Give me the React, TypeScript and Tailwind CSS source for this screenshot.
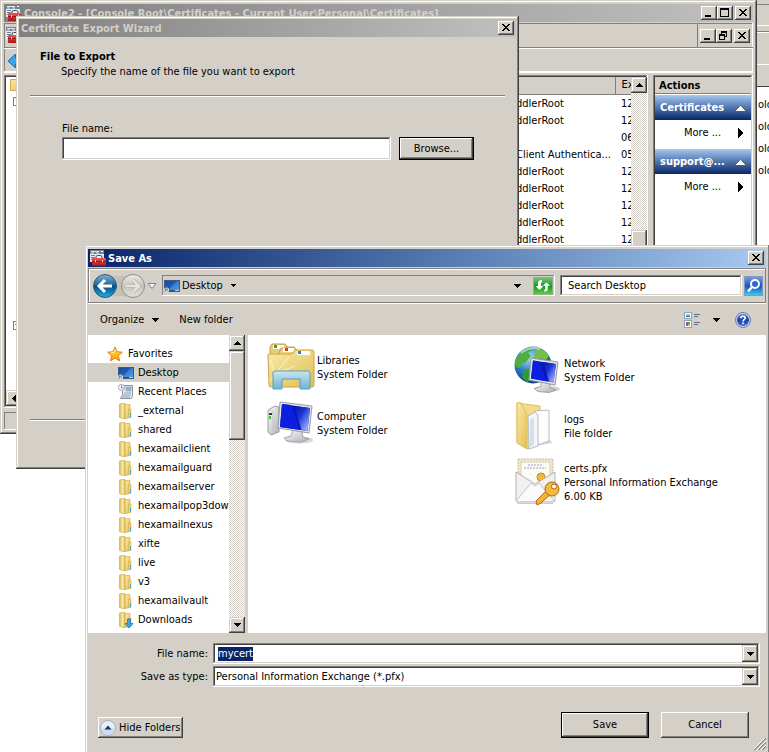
import { useEffect, useRef } from "react";
import type { ReactNode } from "react";

const WINDOW =
  "bg-[#d4d0c8] shadow-[inset_-1px_-1px_#404040,inset_1px_1px_#d4d0c8,inset_-2px_-2px_#808080,inset_2px_2px_#fff]";
const RAISED =
  "bg-[#d4d0c8] shadow-[inset_-1px_-1px_#404040,inset_1px_1px_#fff,inset_-2px_-2px_#808080]";
const SCROLL_PART =
  "bg-[#d4d0c8] shadow-[inset_-1px_-1px_#404040,inset_1px_1px_#d4d0c8,inset_-2px_-2px_#808080,inset_2px_2px_#fff]";
const DEFAULT_BUTTON =
  "bg-[#d4d0c8] border border-black shadow-[inset_-1px_-1px_#404040,inset_1px_1px_#fff,inset_-2px_-2px_#808080]";
const SUNKEN =
  "shadow-[inset_-1px_-1px_#fff,inset_1px_1px_#808080,inset_-2px_-2px_#d4d0c8,inset_2px_2px_#404040]";
const THIN_SUNKEN = "shadow-[inset_-1px_-1px_#fff,inset_1px_1px_#808080]";
const TRACK =
  "bg-[conic-gradient(#fff_25%,#d4d0c8_0_50%,#fff_0_75%,#d4d0c8_0)] bg-[length:2px_2px]";

function Gradients() {
  return (
    <svg width="0" height="0" className="absolute" aria-hidden="true">
      <defs>
        <linearGradient id="gold" x1="0" y1="0" x2="1" y2="1">
          <stop offset="0" stopColor="#f9eaa4" />
          <stop offset="1" stopColor="#e2be58" />
        </linearGradient>
        <linearGradient id="goldSide" x1="0" y1="0" x2="1" y2="0">
          <stop offset="0" stopColor="#d9b64e" />
          <stop offset="0.6" stopColor="#fbeeb0" />
          <stop offset="1" stopColor="#dcb850" />
        </linearGradient>
        <linearGradient id="screen" x1="0" y1="0" x2="1" y2="1">
          <stop offset="0" stopColor="#0414a8" />
          <stop offset="0.4" stopColor="#1a34d8" />
          <stop offset="1" stopColor="#c3d2ff" />
        </linearGradient>
        <linearGradient id="desk" x1="0" y1="0" x2="1" y2="1">
          <stop offset="0" stopColor="#1c4fa8" />
          <stop offset="1" stopColor="#58a8ee" />
        </linearGradient>
        <linearGradient id="metal" x1="0" y1="0" x2="1" y2="1">
          <stop offset="0" stopColor="#ffffff" />
          <stop offset="1" stopColor="#a9adb3" />
        </linearGradient>
        <linearGradient id="glass" x1="0" y1="0" x2="0" y2="1">
          <stop offset="0" stopColor="#c5e8f8" />
          <stop offset="1" stopColor="#62b4dd" />
        </linearGradient>
        <linearGradient id="back" x1="0" y1="0" x2="0" y2="1">
          <stop offset="0" stopColor="#7fb3d3" />
          <stop offset="0.45" stopColor="#1e6a9e" />
          <stop offset="0.5" stopColor="#074a80" />
          <stop offset="1" stopColor="#1fb0e6" />
        </linearGradient>
        <linearGradient id="forward" x1="0" y1="0" x2="0" y2="1">
          <stop offset="0" stopColor="#ececea" />
          <stop offset="0.5" stopColor="#c6c4be" />
          <stop offset="1" stopColor="#e4e2dc" />
        </linearGradient>
        <radialGradient id="globe" cx="0.4" cy="0.3" r="0.75">
          <stop offset="0" stopColor="#a5def5" />
          <stop offset="0.5" stopColor="#2c80c8" />
          <stop offset="1" stopColor="#0b3a86" />
        </radialGradient>
        <linearGradient id="refresh" x1="0" y1="0" x2="0" y2="1">
          <stop offset="0" stopColor="#7cc77c" />
          <stop offset="0.5" stopColor="#109a1c" />
          <stop offset="1" stopColor="#5fd23f" />
        </linearGradient>
        <linearGradient id="find" x1="0" y1="0" x2="0" y2="1">
          <stop offset="0" stopColor="#7d9fe6" />
          <stop offset="0.5" stopColor="#1b4fc4" />
          <stop offset="1" stopColor="#3fd0f0" />
        </linearGradient>
        <linearGradient id="help" x1="0" y1="0" x2="0" y2="1">
          <stop offset="0" stopColor="#5a86dc" />
          <stop offset="0.5" stopColor="#1a3ea6" />
          <stop offset="1" stopColor="#3f74dc" />
        </linearGradient>
        <linearGradient id="red" x1="0" y1="0" x2="0" y2="1">
          <stop offset="0" stopColor="#e85a55" />
          <stop offset="1" stopColor="#b01010" />
        </linearGradient>
        <linearGradient id="star" x1="0" y1="0" x2="0" y2="1">
          <stop offset="0" stopColor="#ffe04a" />
          <stop offset="1" stopColor="#ff9a10" />
        </linearGradient>
      </defs>
    </svg>
  );
}

function ToolboxIcon() {
  return (
    <svg width="16" height="16" viewBox="0 0 16 16" className="shrink-0" aria-hidden="true">
      <rect x="0" y="0" width="14" height="12" fill="#e8ebf0" />
      <rect x="0" y="0" width="14" height="4" fill="#75808f" />
      <path d="M1 1.500h8M1 3h3M6 3h3" stroke="#dfe6f2" />
      <path d="M11 1.500h2" stroke="#fff" />
      <path d="M1 5.500h4M1 7.500h4M1 9.500h1" stroke="#6b7f9e" />
      <path d="M6 8.500V7q0-1.500 1.500-1.500h3Q12 5.500 12 7v1.500" fill="none" stroke="#4a4a4a" />
      <rect x="2" y="8" width="14" height="8" rx="1" fill="url(#red)" />
      <path d="M2 11.500h14" stroke="#a01010" />
      <path d="M5.500 10v2M12.500 10v2" stroke="#f0dcdc" />
    </svg>
  );
}

function DesktopIcon() {
  return (
    <svg width="16" height="16" viewBox="0 0 16 16" className="shrink-0" aria-hidden="true">
      <rect x="0.5" y="2.500" width="15" height="11" fill="url(#desk)" stroke="#40598c" />
      <path d="M1 3h12L5 11H1z" fill="#1746a0" opacity="0.6" />
      <path d="M5 12.500h10" stroke="#2c4d86" />
      <path d="M11 12.500h4" stroke="#b9cde8" />
      <circle cx="2.500" cy="12" r="2.500" fill="#dcebf6" />
      <rect x="1" y="10.500" width="1.500" height="1.500" fill="#e0482a" />
      <rect x="2.500" y="10.500" width="1.500" height="1.500" fill="#58b030" />
      <rect x="1" y="12" width="1.500" height="1.500" fill="#2f8fe0" />
      <rect x="2.500" y="12" width="1.500" height="1.500" fill="#f0c020" />
    </svg>
  );
}

function StarIcon() {
  return (
    <svg width="16" height="16" viewBox="0 0 16 16" className="shrink-0" aria-hidden="true">
      <path
        d="M8 .8l2.100 4.900 5.300.5-4 3.500 1.300 5.300L8 12.200 3.300 15l1.300-5.300-4-3.500 5.300-.5z"
        fill="url(#star)"
        stroke="#e07a10"
        strokeWidth="0.9"
      />
      <path d="M8 3.500l-1 3-3 .6" fill="none" stroke="#fff6a8" />
    </svg>
  );
}

function RecentIcon() {
  return (
    <svg width="16" height="16" viewBox="0 0 16 16" className="shrink-0" aria-hidden="true">
      <path d="M4.500 1.500h10v10l-1 3h-11l2-4z" fill="#e8edf1" stroke="#8b949e" />
      <rect x="8" y="3" width="5" height="4" fill="#8cbce0" stroke="#6d8ba4" strokeWidth="0.5" />
      <path d="M6 9h7M5 11h8M4 13h8" stroke="#8ba0b2" />
      <circle cx="3.500" cy="3.500" r="3" fill="#fff" stroke="#9aa2a9" />
      <path d="M3.500 1.500v2.500h2" fill="none" stroke="#567" strokeWidth="0.8" />
    </svg>
  );
}

function FolderIcon({ download = false }: { download?: boolean }) {
  return (
    <svg width="16" height="16" viewBox="0 0 16 16" className="shrink-0" aria-hidden="true">
      <path d="M1.500 1L4 .5h3v15H5l-3.500-1z" fill="url(#goldSide)" stroke="#d3b04a" strokeWidth="0.7" />
      <path d="M7 1.500h5v13l-5 1z" fill="url(#gold)" stroke="#d3b04a" strokeWidth="0.7" />
      <path d="M10.500 6H13v8.500h-2.500z" fill="#ecd27a" stroke="#c9a53e" strokeWidth="0.5" />
      {download ? (
        <path d="M9.500 7h3v4.500H15L11 16l-4-4.500h2.500z" fill="#3aa5ee" stroke="#1272ba" strokeWidth="0.8" />
      ) : (
        <rect x="12" y="10" width="1" height="4" fill="#4aa8e0" />
      )}
    </svg>
  );
}

function LibrariesIcon() {
  return (
    <svg width="48" height="48" viewBox="0 0 48 48" className="shrink-0" aria-hidden="true">
      <path d="M3 12V4l2-3h13l3 3h6v36H3z" fill="#e9cd72" stroke="#c4a044" />
      <rect x="6" y="2" width="11" height="4" fill="#fff" />
      <rect x="7" y="2" width="3" height="3" fill="#2fa04c" />
      <path d="M12 10l2-5h14l3 3h14v30H12z" fill="#eed47c" stroke="#c4a044" />
      <rect x="16" y="5" width="11" height="4" fill="#fff" />
      <rect x="18" y="5" width="3" height="3" fill="#d8401c" />
      <path d="M1 12q0-1 1-1h23l3-4h17q2 0 2 2v33q0 2-2 2H4q-2 0-2-2z" fill="url(#gold)" stroke="#c9a548" />
      <rect x="30" y="8" width="13" height="4" fill="#fff" />
      <rect x="31" y="8" width="3" height="3" fill="#2c7fd0" />
      <path d="M8 31l14-17M8 31L3 16M8 31l20-8M8 31L2 38" stroke="#fffbe0" opacity="0.75" />
      <path
        d="M6 30q0-2 2-2h33q2 0 2 2v16H33V36H15v10H6z"
        fill="url(#glass)"
        stroke="#4a9cc8"
        opacity="0.92"
      />
    </svg>
  );
}

function ComputerIcon() {
  return (
    <svg width="48" height="48" viewBox="0 0 48 48" className="shrink-0" aria-hidden="true">
      <ellipse cx="32" cy="41" rx="14" ry="3.500" fill="#888" opacity="0.35" />
      <path d="M1 11l7-4 4 1v25l-8 3-3-3z" fill="url(#metal)" stroke="#9a9da2" />
      <path d="M1 11l5 1v23" fill="none" stroke="#c4c6ca" />
      <rect x="2" y="14" width="3" height="2" fill="#333" />
      <rect x="2" y="17" width="2" height="3" fill="#33d02c" />
      <path d="M26 31l9 2 1 5 6 2-8 3-14-1-3-3 7-2z" fill="url(#metal)" stroke="#a6a8ac" />
      <path d="M13 3l32 4-3 27-31-5z" fill="#e3e5e8" stroke="#9a9da2" />
      <path d="M15 5l28 4-2.500 23L13 28z" fill="#0818b8" />
      <path d="M15 5l9 1 9 25-20-3z" fill="#0a1fe0" />
      <path d="M27 7l16 2-2.500 23-6-1z" fill="url(#screen)" />
    </svg>
  );
}

function NetworkIcon() {
  return (
    <svg width="48" height="48" viewBox="0 0 48 48" className="shrink-0" aria-hidden="true">
      <circle cx="19" cy="19" r="18.500" fill="url(#globe)" />
      <path d="M3 11q5-8 13-10l2 3-4 3 3 3-5 6-4 1-2 5-4-1-1-4z" fill="#4fae3c" />
      <path d="M22 2q9 1 13 8l-3 4-6-2-2 3-5-2 2-5z" fill="#72c144" />
      <path d="M9 24l6-1 4 5-2 6-4 2-5-5z" fill="#2d9a34" />
      <path d="M7 7q9-7 19-4" fill="none" stroke="#d8f2fa" strokeWidth="2" opacity="0.6" />
      <ellipse cx="34" cy="43" rx="12" ry="3" fill="#777" opacity="0.35" />
      <path d="M27 36l9 2v4l6 2-7 2.500-11-1-4-3 7-2z" fill="url(#metal)" stroke="#a2a4a8" />
      <path d="M17 12l27 4-3 23-26-5z" fill="#e3e5e8" stroke="#94979c" />
      <path d="M19 14.500l23 3.500-2.500 18.500-22.500-4z" fill="#0818b8" />
      <path d="M19 14.500l6 1 8 20-16-3z" fill="#0a1fe0" />
      <path d="M29 16l13 2-2.500 18.500-4.500-1z" fill="url(#screen)" />
    </svg>
  );
}

function OpenFolderIcon() {
  return (
    <svg width="48" height="48" viewBox="0 0 48 48" className="shrink-0" aria-hidden="true">
      <path d="M16 45l22-4-3-5z" fill="#777" opacity="0.3" />
      <path d="M3 1l23 3v37l-12 6L3 40z" fill="#f2dc8c" stroke="#dcc060" />
      <path d="M21 9l14-1v31l-11 4z" fill="#fdfdfd" stroke="#b9bcc0" />
      <path d="M14 14l7-4 3 3v31l-9 3z" fill="#f4f6f9" stroke="#b9bcc0" />
      <path d="M16 18l4-2v27l-4 2z" fill="#d5e0ee" />
      <path d="M3 1l3-1 7 12v35L3 41z" fill="url(#gold)" stroke="#dcc060" />
    </svg>
  );
}

function CertificateIcon() {
  return (
    <svg width="48" height="48" viewBox="0 0 48 48" className="shrink-0" aria-hidden="true">
      <rect x="4" y="1" width="35" height="26" fill="#eee6d2" stroke="#c9bb97" strokeDasharray="2 1" />
      <rect x="7" y="4" width="29" height="22" fill="#fcfaf4" stroke="#dccfae" />
      <path d="M14 7h15M10 10h22" stroke="#9aa2cc" strokeDasharray="2 1" />
      <circle cx="27" cy="19" r="4" fill="#f0b93c" stroke="#c08a20" />
      <path d="M2 14l19 12 20-12v28q0 2-2 2H4q-2 0-2-2z" fill="#f0f0f0" stroke="#b4b4b4" />
      <path d="M2 43l15-18 4 3 4-3 15 18" fill="#fafafa" stroke="#c4c4c4" />
      <path d="M3 45.500h36" stroke="#999" opacity="0.5" />
      <path d="M34 31l4 4-11 10-4 2-1-4z" fill="#f2b338" stroke="#a86c10" />
      <circle cx="38" cy="31" r="7" fill="#f5b840" stroke="#a86c10" />
      <circle cx="40" cy="28.500" r="2.500" fill="#fff" stroke="#a86c10" />
    </svg>
  );
}

function Triangle({ dir, size = 7, color = "#000" }: { dir: "up" | "down" | "left" | "right"; size?: number; color?: string }) {
  const half = Math.floor((size + 1) / 2);
  const flat = dir === "up" || dir === "down";
  const rows = Array.from({ length: half }, (_, i) => i);
  return (
    <svg
      width={flat ? size : half}
      height={flat ? half : size}
      shapeRendering="crispEdges"
      className="shrink-0"
      aria-hidden="true"
    >
      {rows.map((i) => {
        const span = size - 2 * i;
        const line = dir === "down" || dir === "right" ? i : half - 1 - i;
        return flat ? (
          <rect key={i} x={i} y={line} width={span} height="1" fill={color} />
        ) : (
          <rect key={i} x={line} y={i} width="1" height={span} fill={color} />
        );
      })}
    </svg>
  );
}

type Glyph = "min" | "max" | "restore" | "close";

function CaptionButton({ glyph, label }: { glyph: Glyph; label: string }) {
  return (
    <button type="button" aria-label={label} className={`h-[14px] w-4 shrink-0 ${RAISED}`}>
      <svg width="16" height="14" viewBox="0 0 16 14" shapeRendering="crispEdges" aria-hidden="true">
        {glyph === "min" && <path d="M4 9h6v2H4z" />}
        {glyph === "max" && <path fillRule="evenodd" d="M3 2h9v9H3zM4 4v6h7V4z" />}
        {glyph === "restore" && (
          <path fillRule="evenodd" d="M5 2h6v6H9V7h1V4H6v1H5zM3 5h6v6H3zM4 7v3h4V7z" />
        )}
        {glyph === "close" && (
          <path d="M4 3h2v1h1v1h2V4h1V3h2v1h-1v1h-1v1H9v1h1v1h1v1h1v1h-2V9H9V8H7v1H6v1H4V9h1V8h1V7h1V6H6V5H5V4H4z" />
        )}
      </svg>
    </button>
  );
}

function ScrollButton({ dir, label }: { dir: "up" | "down" | "left"; label: string }) {
  return (
    <button type="button" aria-label={label} className={`flex h-4 w-4 shrink-0 items-center justify-center ${SCROLL_PART}`}>
      <Triangle dir={dir} />
    </button>
  );
}

const CERT_ROWS: [string, string][] = [
  ["ddlerRoot", "12"],
  ["ddlerRoot", "12"],
  ["", "06"],
  ["Client Authentica...", "05"],
  ["ddlerRoot", "12"],
  ["ddlerRoot", "12"],
  ["ddlerRoot", "12"],
  ["ddlerRoot", "12"],
  ["ddlerRoot", "12"],
];

function ActionGroup({ title }: { title: string }) {
  return (
    <section className="mb-[5px]">
      <h3 className="flex h-[25px] items-center justify-between bg-linear-to-b from-[#a6caf0] to-[#0a246a] pt-px pr-[6px] pl-[5px] font-bold text-white">
        {title}
        <Triangle dir="up" size={9} color="#fff" />
      </h3>
      <button type="button" className="flex h-6 w-full items-center justify-between pt-px pr-2 pl-[29px]">
        More ...
        <Triangle dir="right" size={10} />
      </button>
    </section>
  );
}

function ConsoleWindow() {
  return (
    <section className={`absolute top-0 right-3 left-0 flex h-[434px] flex-col p-1 ${WINDOW}`}>
      <header className="flex h-[18px] shrink-0 items-center gap-[2px] bg-linear-to-r from-[#808080] to-[#c0c0c0] px-[2px] font-bold text-[#d4d0c8]">
        <ToolboxIcon />
        <h1 className="min-w-0 flex-1 truncate pt-px">Console2 - [Console Root\Certificates - Current User\Personal\Certificates]</h1>
        <div className="flex">
          <CaptionButton glyph="min" label="Minimize" />
          <CaptionButton glyph="max" label="Maximize" />
        </div>
        <CaptionButton glyph="close" label="Close" />
      </header>
      <div className={`mt-px flex h-[50px] shrink-0 flex-col ${THIN_SUNKEN} border-b border-white`}>
        <div className="flex h-[25px] items-stretch border-b border-[#808080] px-[2px]">
          <div className="flex flex-1 items-center">
            <ToolboxIcon />
          </div>
          <div className="flex items-center gap-[2px] border-l border-[#808080] pt-px pr-px pl-[2px]">
            <div className="flex">
              <CaptionButton glyph="min" label="Minimize view" />
              <CaptionButton glyph="restore" label="Restore view" />
            </div>
            <CaptionButton glyph="close" label="Close view" />
          </div>
        </div>
        <div className="flex flex-1 items-center border-t border-white px-1">
          <button type="button" aria-label="Back">
            <svg width="16" height="14" viewBox="0 0 16 14" aria-hidden="true">
              <path d="M7.500 0v4H16v6H7.500v4L0 7z" fill="#37a5e8" stroke="#1b6fb4" />
            </svg>
          </button>
        </div>
      </div>
      <div className="mt-[2px] flex min-h-0 flex-1 gap-[5px]">
        <div className={`flex w-[180px] flex-col bg-white p-[2px] ${SUNKEN}`}>
          <div className="flex flex-1 flex-col items-start pt-[2px] pl-1">
            <svg width="16" height="12" viewBox="0 0 16 12" aria-hidden="true">
              <path d="M.5 .5h15v11H.5z" fill="url(#gold)" stroke="#d0a850" />
            </svg>
            <span className="mt-[6px] ml-[3px] h-[9px] w-[9px] border border-[#808080] text-center text-[8px] leading-[6px]">-</span>
            <span className="mt-[215px] ml-[3px] h-[9px] w-[9px] border border-[#808080] text-center text-[8px] leading-[6px]">+</span>
          </div>
          <div className={`flex h-4 ${TRACK}`}>
            <ScrollButton dir="left" label="Scroll left" />
          </div>
        </div>
        <div className={`flex min-w-0 flex-1 bg-white p-[2px] pr-px ${SUNKEN}`}>
          <div className="min-w-0 flex-1 overflow-hidden">
            <table className="w-full table-fixed border-collapse text-left">
              <thead>
                <tr className="h-[17px] bg-[#d4d0c8]">
                  <th className="p-0" aria-label="Issued to" />
                  <th className="w-[99px] border-r border-b border-[#808080] p-0" aria-label="Issued by" />
                  <th className="w-4 overflow-hidden border-b border-l border-b-[#808080] border-l-white p-0 pl-[6px] font-normal whitespace-nowrap">Ex</th>
                </tr>
              </thead>
              <tbody>
                {CERT_ROWS.map(([name, date], i) => (
                  <tr key={i} className="h-[17px]">
                    <td className="p-0" />
                    <td className="p-0 pt-[2px] whitespace-nowrap">{name}</td>
                    <td className="overflow-hidden p-0 pt-[2px] pl-[6px]">{date}</td>
                  </tr>
                ))}
              </tbody>
            </table>
          </div>
          <div className={`flex w-4 flex-col ${TRACK}`}>
            <ScrollButton dir="up" label="Scroll list up" />
            <div className={`mt-[137px] flex-1 ${SCROLL_PART}`} />
            <ScrollButton dir="down" label="Scroll list down" />
          </div>
        </div>
        <aside className={`w-[100px] bg-white p-[2px] ${SUNKEN}`}>
          <h2 className="mb-px h-[17px] border-b border-[#808080] bg-[#d4d0c8] pt-px pl-1 leading-4 font-bold">Actions</h2>
          <ActionGroup title="Certificates" />
          <ActionGroup title="support@..." />
        </aside>
      </div>
      <div className={`mt-1 h-[18px] w-full shrink-0 ${THIN_SUNKEN}`} />
    </section>
  );
}

function BackgroundWindow() {
  return (
    <section className="absolute top-0 right-0 w-16 bg-white text-right">
      <div className="h-[5px] border-b border-[#808080] bg-[#d4d0c8]" />
      <div className="h-[21px] border-b border-white bg-[#d4d0c8]" />
      <div className="h-[6px] border-b border-[#808080] bg-[#d4d0c8]" />
      <div className="h-[33px] border-t border-b border-white bg-[#d4d0c8]" />
      <div className="h-[22px] border-b border-[#404040] bg-[#d4d0c8]" />
      <div className="flex flex-col pt-[7px] pl-[53px] text-left leading-[22px]">
        {[0, 1, 2, 3].map((i) => (
          <span key={i} className="overflow-hidden">old</span>
        ))}
      </div>
    </section>
  );
}

function WizardWindow() {
  return (
    <section className={`absolute top-4 left-4 h-[453px] w-[503px] p-[3px] ${WINDOW}`}>
      <header className="flex h-[18px] items-center justify-between bg-linear-to-r from-[#808080] to-[#c0c0c0] px-[2px] font-bold text-[#d4d0c8]">
        <h2 className="pt-px">Certificate Export Wizard</h2>
        <CaptionButton glyph="close" label="Close wizard" />
      </header>
      <div className="px-[11px] pt-3">
        <div className="h-[47px] border-b border-[#808080] pl-[10px] leading-[15px] shadow-[0_1px_#fff]">
          <h3 className="font-bold">File to Export</h3>
          <p className="pl-[21px]">Specify the name of the file you want to export</p>
        </div>
        <div className="pt-[25px] pl-8">
          <label htmlFor="export-name" className="block leading-4">File name:</label>
          <div className="flex gap-2">
            <input id="export-name" className={`h-[23px] w-[329px] bg-white px-1 outline-none ${SUNKEN}`} />
            <button type="button" className={`h-[23px] w-[75px] ${DEFAULT_BUTTON}`}>Browse...</button>
          </div>
        </div>
        <hr className="mt-[259px] border-t border-[#808080] shadow-[0_1px_#fff]" />
      </div>
    </section>
  );
}

const PLACES = [
  "_external", "shared", "hexamailclient", "hexamailguard", "hexamailserver", "hexamailpop3downloader",
  "hexamailnexus", "xifte", "live", "v3", "hexamailvault",
];

function Place({ icon, name, selected = false }: { icon: ReactNode; name: string; selected?: boolean }) {
  return (
    <li className={`flex h-[19px] items-center gap-1 pl-[30px] whitespace-nowrap ${selected ? "bg-[#d4d0c8]" : ""}`}>
      {icon}
      <span className="pt-px">{name}</span>
    </li>
  );
}

function FileItem({ icon, lines }: { icon: ReactNode; lines: string[] }) {
  return (
    <li className="flex h-14 items-center gap-[2px] leading-[14px] whitespace-nowrap">
      {icon}
      <div className="pt-px">
        {lines.map((line) => (
          <div key={line}>{line}</div>
        ))}
      </div>
    </li>
  );
}

function NavigationBar() {
  return (
    <nav className="mt-px flex h-[35px] shrink-0 items-center border border-[#808080] pr-[2px] pl-1 shadow-[inset_1px_1px_#fff,0_1px_#fff]">
      <svg width="69" height="28" viewBox="0 0 69 28" className="shrink-0" aria-hidden="true">
        <path d="M12 2q14 4 28 0v24q-14-4-28 0z" fill="#c3c0b8" />
        <circle cx="12" cy="14" r="12" fill="#e9eef2" />
        <circle cx="12" cy="14" r="11.500" fill="url(#back)" stroke="#33566e" />
        <path d="M12 8l-6 6 6 6M6.500 14H19" fill="none" stroke="#fff" strokeWidth="3" />
        <circle cx="40" cy="14" r="11.500" fill="url(#forward)" stroke="#8e8e8c" />
        <path d="M40 8l6 6-6 6M45.500 14H33" fill="none" stroke="#b4b2ac" strokeWidth="4" />
        <path d="M40 8l6 6-6 6M45.500 14H33" fill="none" stroke="#e6e4de" strokeWidth="2.500" />
        <path d="M55 11.500h8l-4 5z" fill="#f0f4fa" stroke="#7c8596" />
      </svg>
      <div className={`flex h-[21px] min-w-0 flex-1 items-center px-[2px] ${THIN_SUNKEN}`}>
        <DesktopIcon />
        <span className="mr-2 ml-[2px]">Desktop</span>
        <Triangle dir="down" size={5} />
        <span className="flex-1" />
        <Triangle dir="down" size={7} />
        <button type="button" aria-label="Refresh" className="ml-3">
          <svg width="20" height="18" viewBox="0 0 20 18" aria-hidden="true">
            <rect x="0.5" y="0.5" width="19" height="17" fill="url(#refresh)" stroke="#8fae92" />
            <path d="M9 3v2.500H8V9h2.500L6.500 13 2.500 9H5V6q0-3 4-3z" fill="#fff" />
            <path d="M11 15v-2.500h1V9H9.500l4-4 4 4H15v3q0 3-4 3z" fill="#fff" stroke="#209a20" strokeWidth="0.4" />
          </svg>
        </button>
      </div>
      <input
        aria-label="Search Desktop"
        placeholder="Search Desktop"
        className={`ml-[5px] h-[21px] w-[182px] bg-white pr-1 pl-2 outline-none placeholder:text-black placeholder:opacity-100 ${SUNKEN}`}
      />
      <button type="button" aria-label="Search" className="ml-[2px]">
        <svg width="19" height="20" viewBox="0 0 19 20" aria-hidden="true">
          <rect x="0.5" y="0.5" width="18" height="19" fill="url(#find)" stroke="#7d9cc4" />
          <circle cx="11" cy="8" r="4" fill="#3468d0" stroke="#fff" strokeWidth="2" />
          <path d="M8 11l-4 4.500" stroke="#fff" strokeWidth="2.500" />
        </svg>
      </button>
    </nav>
  );
}

function CommandBar() {
  return (
    <div className="flex h-8 shrink-0 items-center pt-px pr-[15px] pl-3">
      <button type="button" className="flex items-center gap-2">
        Organize <Triangle dir="down" size={7} />
      </button>
      <button type="button" className="ml-5">New folder</button>
      <span className="flex-1" />
      <button type="button" aria-label="Change view" className="flex items-center gap-3">
        <svg width="17" height="16" viewBox="0 0 17 16" shapeRendering="crispEdges" aria-hidden="true">
          <path d="M0 0h8v7H0zM0 8h8v8H0z" fill="#8aa2bc" />
          <path d="M1 1h6v5H1zM1 9h6v6H1z" fill="#fff" />
          <path d="M2 2h4v2H2z" fill="#7fc4ee" />
          <path d="M2 4h4v1H2z" fill="#287048" />
          <path d="M2 10h2v2H2z" fill="#d84a2a" />
          <path d="M4 10h2v2H4z" fill="#50a83c" />
          <path d="M2 12h2v2H2z" fill="#3a6fd0" />
          <path d="M4 12h2v2H4z" fill="#e8b020" />
          <path d="M10 2h6v1h-6zM10 4h4v1h-4zM10 10h6v1h-6zM10 12h4v1h-4z" fill="#5f7186" />
        </svg>
        <Triangle dir="down" size={7} />
      </button>
      <button type="button" aria-label="Help" className="ml-[15px]">
        <svg width="16" height="16" viewBox="0 0 16 16" aria-hidden="true">
          <circle cx="8" cy="8" r="7.500" fill="#c8d2e8" stroke="#6f7e9c" />
          <circle cx="8" cy="8" r="6" fill="url(#help)" />
          <path d="M5.800 6.300q0-2 2.200-2t2.200 1.800q0 1-1.200 1.700-1 .6-1 1.700" fill="none" stroke="#fff" strokeWidth="1.600" />
          <rect x="7.200" y="10.500" width="1.600" height="1.600" fill="#fff" />
        </svg>
      </button>
    </div>
  );
}

function SaveDialog() {
  const nameRef = useRef<HTMLInputElement>(null);
  useEffect(() => {
    nameRef.current?.focus();
    nameRef.current?.select();
  }, []);
  return (
    <section className="absolute top-[245px] right-0 bottom-0 left-[85px] flex min-h-[460px] flex-col bg-[#d4d0c8] px-[3px] pt-[4px] shadow-[inset_-1px_0_#808080,inset_1px_1px_#d4d0c8,inset_2px_2px_#fff]">
      <header className="flex h-[18px] shrink-0 items-center gap-[2px] bg-linear-to-r from-[#0a246a] to-[#a6caf0] px-[2px] font-bold text-white">
        <ToolboxIcon />
        <h2 className="flex-1 pt-px">Save As</h2>
        <CaptionButton glyph="close" label="Close dialog" />
      </header>
      <NavigationBar />
      <CommandBar />
      <div className="flex min-h-0 flex-1 gap-[3px]">
        <div className="flex w-[157px] shrink-0 bg-white">
          <ul className="min-w-0 flex-1 overflow-hidden pt-[9px]">
            <li className="flex h-[19px] items-center gap-[5px] pl-[19px]">
              <StarIcon />
              <span className="pt-px">Favorites</span>
            </li>
            <Place icon={<DesktopIcon />} name="Desktop" selected />
            <Place icon={<RecentIcon />} name="Recent Places" />
            {PLACES.map((name) => (
              <Place key={name} icon={<FolderIcon />} name={name} />
            ))}
            <Place icon={<FolderIcon download />} name="Downloads" />
          </ul>
          <div className={`flex w-4 flex-col ${TRACK}`}>
            <ScrollButton dir="up" label="Scroll folders up" />
            <div className={`h-[89px] ${SCROLL_PART}`} />
            <span className="flex-1" />
            <ScrollButton dir="down" label="Scroll folders down" />
          </div>
        </div>
        <div className="flex flex-1 bg-white pl-[19px]">
          <ul className="w-[247px] pt-1">
            <FileItem icon={<LibrariesIcon />} lines={["Libraries", "System Folder"]} />
            <FileItem icon={<ComputerIcon />} lines={["Computer", "System Folder"]} />
          </ul>
          <ul className="pt-[7px]">
            <FileItem icon={<NetworkIcon />} lines={["Network", "System Folder"]} />
            <FileItem icon={<OpenFolderIcon />} lines={["logs", "File folder"]} />
            <FileItem icon={<CertificateIcon />} lines={["certs.pfx", "Personal Information Exchange", "6.00 KB"]} />
          </ul>
        </div>
      </div>
      <form className="shrink-0 pt-[10px]" onSubmit={(e) => e.preventDefault()}>
        <div className="grid grid-cols-[120px_1fr] items-center gap-x-[5px] gap-y-[2px] pr-[6px]">
          <label htmlFor="save-name" className="pt-px text-right">File name:</label>
          <div className={`flex h-[21px] bg-white p-[2px] ${SUNKEN}`}>
            <input
              id="save-name"
              ref={nameRef}
              defaultValue="mycert"
              className="min-w-0 flex-1 pl-[3px] leading-[14px] outline-none selection:bg-[#0a246a] selection:text-white"
            />
            <button type="button" aria-label="Previous names" className={`flex w-4 items-center justify-center ${SCROLL_PART}`}>
              <Triangle dir="down" />
            </button>
          </div>
          <label htmlFor="save-type" className="pt-px text-right">Save as type:</label>
          <div className={`relative h-[21px] bg-white p-[2px] ${SUNKEN}`}>
            <select id="save-type" className="block h-full w-full appearance-none pl-px outline-none">
              <option>Personal Information Exchange (*.pfx)</option>
            </select>
            <span className={`pointer-events-none absolute top-[2px] right-[2px] bottom-[2px] flex w-4 items-center justify-center ${SCROLL_PART}`}>
              <Triangle dir="down" />
            </span>
          </div>
        </div>
        <div className="mt-[25px] flex items-end gap-3 pr-[17px] pb-[14px] pl-[10px]">
          <button type="button" className={`flex h-[21px] items-center gap-[3px] pt-px pr-[3px] pl-[2px] ${RAISED}`}>
            <svg width="16" height="16" viewBox="0 0 16 16" aria-hidden="true">
              <circle cx="8" cy="8" r="7.500" fill="#e9eff6" stroke="#a3b1c4" />
              <path d="M1.500 8.500a6.500 6.500 0 0013 0z" fill="#c9dcf0" />
              <path d="M4.500 9.500h7L8 5.500z" fill="#16336e" />
            </svg>
            Hide Folders
          </button>
          <span className="flex-1" />
          <button type="submit" className={`h-[26px] w-[88px] ${DEFAULT_BUTTON}`}>Save</button>
          <button type="button" className={`h-[26px] w-[88px] ${RAISED}`}>Cancel</button>
        </div>
      </form>
      <svg width="12" height="12" className="absolute right-[3px] bottom-[2px]" aria-hidden="true">
        <path d="M0 12L12 0M4 12l8-8M8 12l4-4" stroke="#808080" strokeWidth="1.500" />
        <path d="M-1 12L11 0M3 12l9-9M7 12l5-5" stroke="#fff" />
      </svg>
    </section>
  );
}

export default function App() {
  return (
    <main className="relative min-h-screen w-full overflow-hidden bg-white font-['DejaVu_Sans_Condensed','DejaVu_Sans',sans-serif] text-[11px] leading-[14px] text-black">
      <Gradients />
      <BackgroundWindow />
      <ConsoleWindow />
      <WizardWindow />
      <SaveDialog />
    </main>
  );
}
